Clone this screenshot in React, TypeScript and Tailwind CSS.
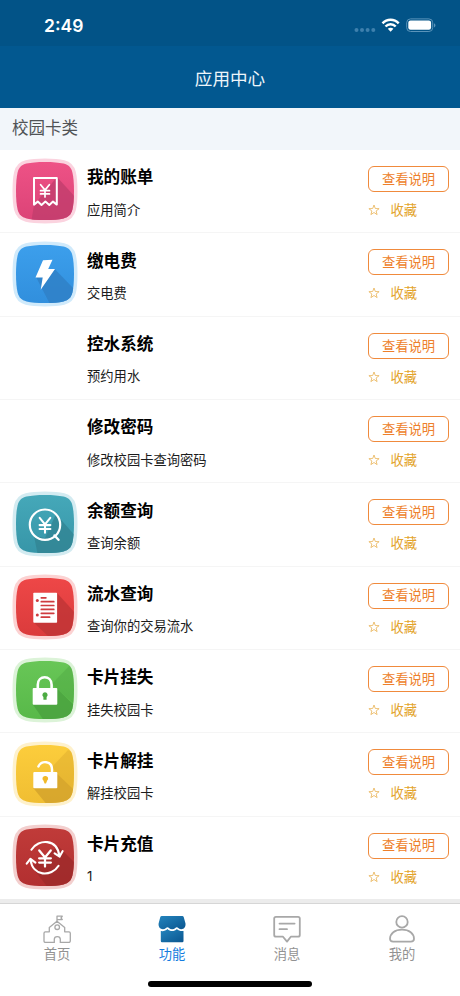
import type { ReactNode } from 'react';

const TILE =
    'M0-29C8-29 14-28.5 18.5-27.4C23.6-26.1 26.1-23.6 27.4-18.5C28.5-14 29-8 29 0C29 8 28.5 14 27.4 18.5C26.1 23.6 23.6 26.1 18.5 27.4C14 28.5 8 29 0 29C-8 29-14 28.5-18.5 27.4C-23.6 26.1-26.1 23.6-27.4 18.5C-28.5 14-29 8-29 0C-29-8-28.5-14-27.4-18.5C-26.1-23.6-23.6-26.1-18.5-27.4C-14-28.5-8-29 0-29Z';

type TileProps = {
    id: string;
    from: string;
    to: string;
    halo: string;
    shade: string;
    shadow: string;
    glare?: string;
    children: ReactNode;
};

function Tile({ id, from, to, halo, shade, shadow, glare, children }: TileProps) {
    return (
        <svg viewBox="-33 -33 66 66" className="size-[66px]">
            <defs>
                <linearGradient id={`${id}-bg`} x1="0" y1="0" x2="0" y2="1">
                    <stop offset="0" stopColor={from} />
                    <stop offset="1" stopColor={to} />
                </linearGradient>
                <clipPath id={`${id}-clip`}>
                    <path d={TILE} />
                </clipPath>
            </defs>
            <path d={TILE} fill={halo} stroke={halo} strokeWidth="7" />
            <path d={TILE} fill={`url(#${id}-bg)`} />
            <g clipPath={`url(#${id}-clip)`} fill={shade}>
                {glare && <path d={glare} opacity=".35" />}
                <path d={shadow} opacity=".8" />
            </g>
            {children}
        </svg>
    );
}

function Yen({ y = 0, scale = 1 }: { y?: number; scale?: number }) {
    return (
        <path
            transform={`translate(0 ${y}) scale(${scale})`}
            d="M-4.6-6.3L0-.6L4.6-6.3M0-.6V6.6M-4.7 0H4.7M-4.7 3.4H4.7"
            fill="none"
            stroke="#fff"
            strokeWidth="1.8"
            strokeLinecap="round"
        />
    );
}

const billIcon = (
    <Tile id="bill" from="#ee5286" to="#dc4377" halo="#fbd3df" shade="#c23d6d"
        shadow="M12-14L32 8V32H-14L-11 14Z">
        <path
            d="M-11 13.6V-13H11.8V13.6L8 10.6L4.3 14L.4 10.6L-3.5 14L-7.2 10.6Z"
            fill="none" stroke="#fff" strokeWidth="2" strokeLinejoin="round"
        />
        <Yen y={-0.3} scale={0.95} />
    </Tile>
);

const powerIcon = (
    <Tile id="power" from="#3c9fec" to="#318fdd" halo="#d0eafb" shade="#2f7fc6"
        shadow="M9.7-5L31 17V32H6L-9 3L-2 3Z">
        <path d="M-2-13.7L7.5-14.3L3.2-5H10L-4.3 15.7L-2.3 3.4H-9.5Z" fill="#fff" />
    </Tile>
);

const balanceIcon = (
    <Tile id="balance" from="#45a8b9" to="#3796a8" halo="#d3ebf1" shade="#328494"
        shadow="M11-10L32 14V32H-7L-11 12L0 14Z">
        <circle cy=".7" r="15.2" fill="none" stroke="#fff" strokeWidth="2.2" />
        <path d="M9.5 11.5L13.5 15.8" stroke="#fff" strokeWidth="2.4" strokeLinecap="round" />
        <Yen y={1.1} scale={1.15} />
    </Tile>
);

const flowIcon = (
    <Tile id="flow" from="#ee4747" to="#db3b3c" halo="#fcd2d2" shade="#bf3536"
        shadow="M12-14L32 8V32H6L-11.7 15Z">
        <rect x="-11.7" y="-14.3" width="23.8" height="30" rx=".8" fill="#fff" />
        <g stroke="#cf3b3f" strokeWidth="1.7" strokeLinecap="round">
            <path d="M-3.7-9.2H.9M-3.7-5.3H8.8M-3.7-1.5H8.8M-3.7 2.4H8.8M-3.7 6.3H8.8M-3.7 10.2H4.6" />
        </g>
        <circle cx="-7.7" cy="-6.4" r="1.5" fill="#cf3b3f" />
        <circle cx="-7.7" cy="8" r="1.5" fill="#cf3b3f" />
    </Tile>
);

const lockIcon = (
    <Tile id="lock" from="#68c657" to="#58b949" halo="#dcf3d8" shade="#4aa13f"
        shadow="M12.3-1L30 16V32H0L-12 14.7Z" glare="M7-6L27-27L32-20V16L12-1Z">
        <path d="M-7.2-1V-5.2C-7.2-15.2 6.6-15.2 6.6-5.2V-1" fill="none" stroke="#fff" strokeWidth="2.6" />
        <rect x="-12.3" y="-2" width="24.6" height="16.7" rx="1" fill="#fff" />
        <path d="M0 2.2A2.7 2.7 0 0 1 1.6 7V9.7H-1.6V7A2.7 2.7 0 0 1 0 2.2Z" fill="#4cab42" />
    </Tile>
);

const unlockIcon = (
    <Tile id="unlock" from="#fccd3c" to="#f0be32" halo="#fef1cc" shade="#d2a12c"
        shadow="M12.3 0L31 18V32H3L-11.7 14Z" glare="M7-7L23-24L32-20V19L12 0Z">
        <path d="M-6.6-7.5C-3.8-13.7 7-13.7 7-4.5V-1" fill="none" stroke="#fff" strokeWidth="2.4" strokeLinecap="round" />
        <rect x="-11.7" y="-2" width="24" height="16.2" rx="1" fill="#fff" />
        <path d="M.3 2A2.6 2.6 0 0 1 2.2 6.6L1 9.6H-.4L-1.6 6.6A2.6 2.6 0 0 1 .3 2Z" fill="#f1b927" />
    </Tile>
);

const rechargeIcon = (
    <Tile id="recharge" from="#c03b39" to="#b22f30" halo="#f3cfce" shade="#9d2a2b"
        shadow="M13-11L32 8V32H4L-13 10Z">
        <g fill="none" stroke="#fff" strokeWidth="2.1" strokeLinecap="round" strokeLinejoin="round">
            <path d="M-13.6-7.3C-6.5-18.4 12.4-18.5 14.3-1" />
            <path d="M9.6-3.6L14.6-.4L17.6-5.8" />
            <path d="M13.6 8.8C6.5 20 -12.6 19.8-14.4 2.6" />
            <path d="M-18.3 6.7L-14.6 1.8L-9.6 5.6" />
        </g>
        <Yen y={1.3} scale={1.25} />
    </Tile>
);

type App = { nome: string; desc: string; icon?: ReactNode };

const apps: App[] = [
    { nome: '我的账单', desc: '应用简介', icon: billIcon },
    { nome: '缴电费', desc: '交电费', icon: powerIcon },
    { nome: '控水系统', desc: '预约用水' },
    { nome: '修改密码', desc: '修改校园卡查询密码' },
    { nome: '余额查询', desc: '查询余额', icon: balanceIcon },
    { nome: '流水查询', desc: '查询你的交易流水', icon: flowIcon },
    { nome: '卡片挂失', desc: '挂失校园卡', icon: lockIcon },
    { nome: '卡片解挂', desc: '解挂校园卡', icon: unlockIcon },
    { nome: '卡片充值', desc: '1', icon: rechargeIcon },
];

function AppRow({ nome, desc, icon }: App) {
    return (
        <li className="flex h-[83.33px] border-b border-[#f5f5f5] pl-3 pr-[11px]">
            <div className="w-[75px] shrink-0 pt-[7.5px]">{icon}</div>
            <div className="flex-1 pt-[14.3px]">
                <h2 className="text-[16.6px] leading-6 font-bold text-black">{nome}</h2>
                <p className="mt-[11.3px] font-['Inter','Noto_Sans_CJK_SC',sans-serif] text-[13.3px] leading-5 text-[#1c1c1c]">{desc}</p>
            </div>
            <div className="w-[81px] pt-4">
                <button className="flex h-[26px] w-full items-center justify-center rounded-[6px] border-[1.5px] border-[#f08a3c] pb-px text-[13.3px] leading-none text-[#ee7f2b]">
                    查看说明
                </button>
                <div className="mt-2 flex items-center text-[13.3px] leading-5 text-[#e3a42b]">
                    <svg viewBox="0 0 12 12" className="mr-[10.5px] size-3">
                        <path
                            d="M6 1L7.3 4.5L11.1 4.7L8.1 7L9.1 10.6L6 8.5L2.9 10.6L3.9 7L.9 4.7L4.7 4.5Z"
                            fill="none" stroke="#e8b354" strokeWidth=".8"
                        />
                    </svg>
                    收藏
                </div>
            </div>
        </li>
    );
}

function StatusBar() {
    return (
        <div className="flex h-[46px] items-start justify-between bg-[#025387] pt-[13px] pr-[24px] pl-[44px] text-white">
            <span className="font-['Inter'] text-[17.5px] leading-[26px] font-semibold">2:49</span>
            <svg viewBox="0 0 84 20" className="mt-[2px] h-5 w-[84px]">
                <g fill="#3e80ad">
                    <circle cx="4.5" cy="15" r="2" />
                    <circle cx="10" cy="15" r="2" />
                    <circle cx="15.6" cy="15" r="2" />
                    <circle cx="21.3" cy="15" r="2" />
                </g>
                <g fill="none" stroke="#fff" strokeWidth="2.5">
                    <path d="M30.5 8.4C35 3.6 42.2 3.6 46.7 8.4" />
                    <path d="M33.5 11.5C36.3 8.6 40.9 8.6 43.7 11.5" />
                </g>
                <path d="M35.8 13.8C37.3 12.4 39.9 12.4 41.4 13.8L38.6 16.7Z" fill="#fff" />
                <rect x="54.7" y="3.9" width="26" height="12.6" rx="3.8" fill="none" stroke="#5b94ba" />
                <rect x="56.3" y="5.6" width="22.8" height="9.2" rx="2.2" fill="#fff" />
                <path d="M82 8.2C84 9 84 11.6 82 12.4Z" fill="#5b94ba" />
            </svg>
        </div>
    );
}

const tabs = [
    {
        label: '首页',
        icon: (
            <g fill="none" stroke="#a8a8a8" strokeWidth="1.3" strokeLinejoin="round">
                <path d="M11.3 27.4H2.3Q1 27.4 1 26V18.2Q1 16.8 2.3 16.8H6.3V12.6L14 6.3L21.7 12.6V16.8H26Q27.3 16.8 27.3 18.2V26Q27.3 27.4 26 27.4H17.3V24.3C17.3 20.7 11.3 20.7 11.3 24.3Z" />
                <circle cx="14.2" cy="12.2" r="2.3" />
                <path d="M14 6.3V1.2H19.3L18 3L19.3 4.6H14" />
            </g>
        ),
    },
    {
        label: '功能',
        active: true,
        icon: (
            <>
                <defs>
                    <linearGradient id="shop" x1="0" y1="0" x2="1" y2="1">
                        <stop offset="0" stopColor="#2484bd" />
                        <stop offset="1" stopColor="#0a5690" />
                    </linearGradient>
                </defs>
                <path
                    d="M3.7 1H24.3Q25.3 1 25.7 2L27.5 8.5C27.8 12.5 25.7 14.2 23.4 14.2C21 14.2 19.8 12.2 18.8 12.2C17.6 12.2 16.8 14.2 14.2 14.2C11.5 14.2 10.7 12.2 9.5 12.2C8.4 12.2 7.3 14.2 4.8 14.2C2.2 14.2.2 12 .6 8.5L2.3 2Q2.7 1 3.7 1Z"
                    fill="url(#shop)"
                />
                <path
                    d="M2.8 16.1C6 16.5 7.7 15.5 9.4 14C12 16.8 16.5 16.8 18.9 14C20.7 15.7 22.8 16.4 25.5 15.9V26Q25.5 27.2 24.3 27.2H4Q2.8 27.2 2.8 26Z"
                    fill="url(#shop)"
                />
            </>
        ),
    },
    {
        label: '消息',
        icon: (
            <g fill="none" stroke="#a8a8a8" strokeWidth="1.8" strokeLinejoin="round" strokeLinecap="round">
                <path d="M3 1.8H25Q26.8 1.8 26.8 3.6V20Q26.8 21.7 25 21.7H17.8L14 26.6L10 21.7H3Q1.2 21.7 1.2 20V3.6Q1.2 1.8 3 1.8Z" />
                <path d="M6.5 8.6H21.6M6.5 14.2H14" />
            </g>
        ),
    },
    {
        label: '我的',
        icon: (
            <g fill="none" stroke="#a8a8a8" strokeWidth="1.8">
                <circle cx="14" cy="6.9" r="5.7" />
                <path d="M5.2 26.6C2.9 26.6 2 25.4 2 23.7C2.2 18.5 6.6 14.7 14 14.7C21.3 14.7 25.9 18.5 26 23.7C26 25.4 25 26.6 22.8 26.6Z" />
            </g>
        ),
    },
];

export default function App() {
    return (
        <div className="flex h-[996px] w-[460px] flex-col overflow-hidden bg-white font-['Noto_Sans_CJK_SC',sans-serif]">
            <StatusBar />
            <header className="flex h-[62px] items-center justify-center bg-[#025890] pt-px text-[17.6px] leading-6 text-[#edf5fa]">
                应用中心
            </header>
            <div className="flex h-[42px] items-center bg-[#f2f6fa] px-3 pb-[5px] text-[16.5px] leading-6 text-[#505356]">
                校园卡类
            </div>
            <ul className="h-[749px]">
                {apps.map((app) => (
                    <AppRow key={app.nome} {...app} />
                ))}
            </ul>
            <nav className="flex flex-1 flex-col border-t-4 border-[#ececec]">
                <div className="grid h-[78px] grid-cols-4 border-t border-[#d6d6d6] pt-[11px]">
                    {tabs.map(({ label, icon, active }) => (
                        <div
                            key={label}
                            className={`flex flex-col items-center pr-px text-[13.3px] leading-5 ${active ? 'text-[#147ce0]' : 'text-[#929292]'}`}
                        >
                            <svg viewBox="0 0 28 28" className="size-7">{icon}</svg>
                            <span className="mt-px">{label}</span>
                        </div>
                    ))}
                </div>
                <div className="mx-auto h-[6px] w-[164px] rounded-full bg-black" />
            </nav>
        </div>
    );
}
